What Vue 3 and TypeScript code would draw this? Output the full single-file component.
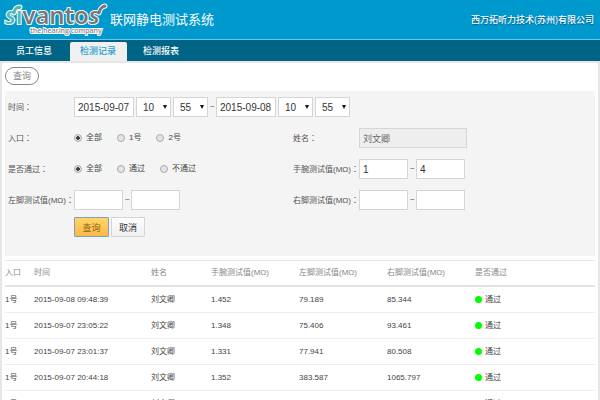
<script setup lang="ts">
import { reactive } from 'vue'

interface TestRecord {
  gate: string
  time: string
  name: string
  wrist: string
  left: string
  right: string
  result: string
}

const tabs: string[] = ['员工信息', '检测记录', '检测报表']
const activeTab = '检测记录'
const hours: string[] = ['08', '09', '10', '11', '12']
const minutes: string[] = ['00', '15', '30', '45', '55']

const form = reactive({
  fromDate: '2015-09-07',
  fromHour: '10',
  fromMinute: '55',
  toDate: '2015-09-08',
  toHour: '10',
  toMinute: '55',
  gate: '全部',
  passed: '全部',
  name: '刘文卿',
  wristMin: '1',
  wristMax: '4',
  leftMin: '',
  leftMax: '',
  rightMin: '',
  rightMax: '',
})

const gates: string[] = ['全部', '1号', '2号']
const results: string[] = ['全部', '通过', '不通过']

const columns: string[] = ['入口', '时间', '姓名', '手腕测试值(MΩ)', '左脚测试值(MΩ)', '右脚测试值(MΩ)', '是否通过']

const records: TestRecord[] = [
  { gate: '1号', time: '2015-09-08 09:48:39', name: '刘文卿', wrist: '1.452', left: '79.189', right: '85.344', result: '通过' },
  { gate: '1号', time: '2015-09-07 23:05:22', name: '刘文卿', wrist: '1.348', left: '75.406', right: '93.461', result: '通过' },
  { gate: '1号', time: '2015-09-07 23:01:37', name: '刘文卿', wrist: '1.331', left: '77.941', right: '80.508', result: '通过' },
  { gate: '1号', time: '2015-09-07 20:44:18', name: '刘文卿', wrist: '1.352', left: '383.587', right: '1065.797', result: '通过' },
  { gate: '1号', time: '2015-09-07 20:38:08', name: '刘文卿', wrist: '1.364', left: '80.438', right: '94.476', result: '通过' },
]
</script>

<template>
  <div class="page">
    <header class="banner">
      <svg class="logo" viewBox="4 0 104 39" role="img" aria-label="sivantos the hearing company">
        <path class="swash edge" d="M14 13C15 9 16 7 20 7M99 13C100 9 101 7 105 6" />
        <text class="word" x="5" y="24"><tspan class="teal slant">s</tspan><tspan class="teal">i</tspan><tspan>vanto</tspan><tspan class="slant">s</tspan></text>
        <path class="swash teal-line" d="M14 13C15 9 16 7 20 7" />
        <path class="swash grey-line" d="M99 13C100 9 101 7 105 6" />
        <text class="slogan" x="30" y="33">the hearing company</text>
      </svg>
      <h1>联网静电测试系统</h1>
      <span class="company">西万拓听力技术(苏州)有限公司</span>
    </header>

    <nav class="tabs">
      <a v-for="tab in tabs" :key="tab" href="#" :class="{ active: tab === activeTab }">{{ tab }}</a>
    </nav>

    <main class="content">
      <div class="chip-row"><button type="button" class="chip">查询</button></div>

      <form class="search" @submit.prevent>
        <div class="line">
          <label class="caption" for="from-date">时间<span class="colon">：</span></label>
          <div class="fields">
            <input id="from-date" v-model="form.fromDate" class="box date" type="text" />
            <span class="pick"><select v-model="form.fromHour" class="box" aria-label="开始小时"><option v-for="h in hours" :key="h">{{ h }}</option></select></span>
            <span class="pick"><select v-model="form.fromMinute" class="box" aria-label="开始分钟"><option v-for="m in minutes" :key="m">{{ m }}</option></select></span>
            <span class="tilde">~</span>
            <input v-model="form.toDate" class="box date" type="text" aria-label="结束日期" />
            <span class="pick"><select v-model="form.toHour" class="box" aria-label="结束小时"><option v-for="h in hours" :key="h">{{ h }}</option></select></span>
            <span class="pick"><select v-model="form.toMinute" class="box" aria-label="结束分钟"><option v-for="m in minutes" :key="m">{{ m }}</option></select></span>
          </div>
        </div>

        <div class="line">
          <span id="gate-caption" class="caption">入口<span class="colon">：</span></span>
          <div class="fields radios" role="radiogroup" aria-labelledby="gate-caption">
            <label v-for="g in gates" :key="g"><input v-model="form.gate" type="radio" name="gate" :value="g" />{{ g }}</label>
          </div>
          <label class="caption" for="person">姓名<span class="colon">：</span></label>
          <div class="fields"><input id="person" v-model="form.name" class="box person" type="text" readonly /></div>
        </div>

        <div class="line">
          <span id="passed-caption" class="caption">是否通过<span class="colon">：</span></span>
          <div class="fields radios" role="radiogroup" aria-labelledby="passed-caption">
            <label v-for="r in results" :key="r"><input v-model="form.passed" type="radio" name="passed" :value="r" />{{ r }}</label>
          </div>
          <label class="caption" for="wrist-min">手腕测试值(MΩ)<span class="colon">：</span></label>
          <div class="fields">
            <input id="wrist-min" v-model="form.wristMin" class="box value" type="text" />
            <span class="tilde">~</span>
            <input v-model="form.wristMax" class="box value" type="text" aria-label="手腕测试值上限" />
          </div>
        </div>

        <div class="line">
          <label class="caption" for="left-min">左脚测试值(MΩ)<span class="colon">：</span></label>
          <div class="fields">
            <input id="left-min" v-model="form.leftMin" class="box value" type="text" />
            <span class="tilde">~</span>
            <input v-model="form.leftMax" class="box value" type="text" aria-label="左脚测试值上限" />
          </div>
          <label class="caption" for="right-min">右脚测试值(MΩ)<span class="colon">：</span></label>
          <div class="fields">
            <input id="right-min" v-model="form.rightMin" class="box value" type="text" />
            <span class="tilde">~</span>
            <input v-model="form.rightMax" class="box value" type="text" aria-label="右脚测试值上限" />
          </div>
        </div>

        <div class="actions">
          <button type="submit" class="btn primary">查询</button>
          <button type="button" class="btn">取消</button>
        </div>
      </form>

      <table class="records">
        <colgroup>
          <col class="c-gate" /><col class="c-time" /><col class="c-name" /><col class="c-value" /><col class="c-value" /><col class="c-value" /><col />
        </colgroup>
        <thead>
          <tr><th v-for="c in columns" :key="c" scope="col">{{ c }}</th></tr>
        </thead>
        <tbody>
          <tr v-for="r in records" :key="r.time">
            <td>{{ r.gate }}</td>
            <td>{{ r.time }}</td>
            <td>{{ r.name }}</td>
            <td>{{ r.wrist }}</td>
            <td>{{ r.left }}</td>
            <td>{{ r.right }}</td>
            <td><span class="status"><i class="dot"></i>{{ r.result }}</span></td>
          </tr>
        </tbody>
      </table>
    </main>
  </div>
</template>

<style>
body {
  margin: 0;
  background: #fff;
}
</style>

<style scoped>
.page,
.page * {
  box-sizing: border-box;
}

.page {
  display: flex;
  flex-direction: column;
  height: 100vh;
  overflow: hidden;
  font-family: "Liberation Sans", "Noto Sans CJK SC", sans-serif;
  font-size: 8px;
  line-height: 12px;
  color: #444;
}

.page input,
.page select,
.page button {
  margin: 0;
  font-family: inherit;
  color: #333;
}

.banner {
  display: flex;
  flex: none;
  align-items: center;
  height: 40px;
  padding: 0 6px 0 4px;
  background: #0099ce;
  border-bottom: 1px solid #6cc3e6;
  color: #fff;
}

.logo {
  flex: none;
  width: 104px;
  height: 39px;
  overflow: visible;
}

.word {
  font-family: "Open Sans", sans-serif;
  font-size: 24px;
  font-weight: 600;
  fill: #777;
  stroke: #fff;
  stroke-width: 2px;
  paint-order: stroke;
}

.teal {
  fill: #55b9b5;
}

.slant {
  font-style: italic;
}

.swash {
  fill: none;
  stroke-width: 3px;
  stroke-linecap: round;
}

.edge {
  stroke: #fff;
  stroke-width: 5px;
}

.teal-line {
  stroke: #55b9b5;
}

.grey-line {
  stroke: #777;
}

.slogan {
  font-family: "Open Sans", sans-serif;
  font-size: 7px;
  font-weight: 600;
  fill: #888;
  stroke: #fff;
  stroke-width: 2px;
  paint-order: stroke;
}

h1 {
  margin: 0 0 0 2px;
  font-size: 13px;
  font-weight: 400;
  line-height: 16px;
}

.company {
  margin-left: auto;
  font-size: 9px;
  font-weight: 500;
  text-shadow: 0 1px 1px #00567a;
}

.tabs {
  display: flex;
  flex: none;
  align-items: flex-end;
  gap: 1px;
  height: 21px;
  background: #006487;
}

.tabs a {
  flex: none;
  width: 69px;
  height: 19px;
  padding-left: 16px;
  font-size: 9px;
  font-weight: 500;
  line-height: 19px;
  color: #fff;
  text-decoration: none;
}

.tabs a.active {
  width: 57px;
  padding: 0 10px;
  background: #f0f0f0;
  border-radius: 2px 2px 0 0;
  color: #1d9fcf;
}

.tabs a.active + a {
  padding-left: 15px;
}

.content {
  flex: 1;
  padding: 4px 3px 0;
  border: 2px solid #e6e6e6;
  border-bottom: 0;
}

.chip-row {
  display: flex;
  height: 24px;
}

.chip {
  width: 34px;
  height: 18px;
  padding: 0;
  background: #fff;
  border: 1px solid #888;
  border-radius: 9px;
  font-size: 9px;
  line-height: 14px;
}

.page .chip {
  color: #888;
}

.search {
  display: flex;
  flex-direction: column;
  gap: 11px;
  height: 165px;
  padding: 6px 3px 0;
  background: #f4f4f4;
}

.line {
  display: grid;
  grid-template-columns: 66px 219px 66px 1fr;
  align-items: center;
  height: 20px;
}

.caption {
  white-space: nowrap;
  color: #555;
}

.colon {
  font-family: "Noto Sans CJK TC", sans-serif;
}

.fields {
  display: flex;
  align-items: center;
  gap: 2px;
}

.box {
  height: 20px;
  padding: 0 3px;
  background: #fff;
  border: 1px solid #d5d5d5;
  border-radius: 0;
  font-size: 10px;
}

.date {
  flex: none;
  width: 60px;
}

.value {
  flex: none;
  width: 49px;
}

.person {
  width: 108px;
  background: #eee;
  font-size: 9px;
}

.page .person {
  color: #666;
}

.pick {
  position: relative;
  flex: none;
  width: 35px;
}

.pick select {
  display: block;
  width: 100%;
  padding-left: 6px;
  appearance: none;
}

.pick::after {
  content: "";
  position: absolute;
  top: 8px;
  right: 4px;
  border: solid transparent;
  border-width: 4px 2px 0;
  border-top-color: #111;
  pointer-events: none;
}

.tilde {
  flex: none;
  width: 4px;
  text-align: center;
}

.radios {
  gap: 15px;
}

.radios label {
  display: flex;
  align-items: center;
  gap: 4px;
}

.radios input {
  width: 8px;
  height: 8px;
  appearance: none;
  background: #e4e4e4;
  border: 1px solid #aaa;
  border-radius: 50%;
}

.radios input:checked {
  background: radial-gradient(circle, #444 0 2px, #e4e4e4 2px);
}

.actions {
  display: flex;
  gap: 2px;
  margin-top: -4px;
  padding-left: 66px;
}

.btn {
  width: 34px;
  height: 20px;
  padding: 0;
  background: linear-gradient(#fdfdfd, #f0f0f0);
  border: 1px solid #d5d5d5;
  border-radius: 1px;
  font-size: 9px;
}

.btn.primary {
  width: 35px;
  background: linear-gradient(#ffd566, #fdb847);
  border-color: #7d9fc4;
}

.page .btn.primary {
  color: #8c6420;
}

.records {
  width: 100%;
  margin-top: 4px;
  border-collapse: separate;
  border-spacing: 0;
  border-top: 1px solid #e8e8e8;
  table-layout: fixed;
}

.c-gate {
  width: 29px;
}

.c-time {
  width: 117px;
}

.c-name {
  width: 60px;
}

.c-value {
  width: 88px;
}

.records th {
  height: 26px;
  padding: 0;
  border-bottom: 2px solid #e2e2e2;
  font-weight: 400;
  text-align: left;
  white-space: nowrap;
  color: #888;
}

.records td {
  height: 26px;
  padding: 0;
  border-bottom: 1px solid #eee;
  white-space: nowrap;
}

.status {
  display: flex;
  align-items: center;
  gap: 3px;
}

.dot {
  width: 7px;
  height: 7px;
  background: #0f0;
  border-radius: 50%;
}
</style>
